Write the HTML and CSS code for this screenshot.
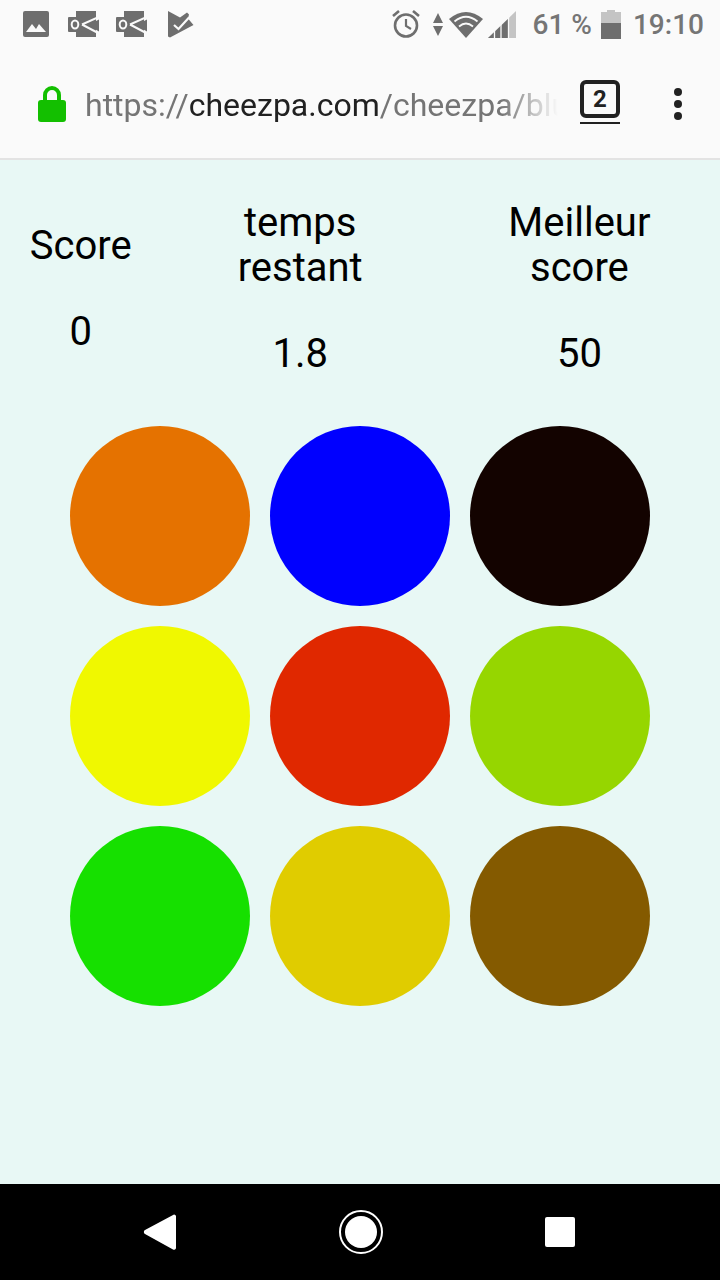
FILE: index.html
```html
<!DOCTYPE html>
<html>
  <head>
    <meta charset="UTF-8">
    <title>Cheezpa</title>
    <link rel="stylesheet" href="styles.css">
  </head>
  <body>
    <div class="status">
      <div class="status-left">
        <svg class="ic-photo" width="26" height="26" viewBox="0 0 26 26"><path d="M2 0h22a2 2 0 0 1 2 2v22a2 2 0 0 1-2 2H2a2 2 0 0 1-2-2V2a2 2 0 0 1 2-2z" fill="#6e6e6e"/><path d="M3 21l6-8 4 5 3-5 7 8z" fill="#fafafa"/></svg>
        <svg class="ic-mail" width="32" height="26" viewBox="0 0 32 26"><path d="M8 0h20v26H8z" fill="#6e6e6e"/><rect x="0" y="6" width="14" height="15" rx="1" fill="#6e6e6e"/><path d="M14 13.500L32 5.500M14 13.500L32 23" stroke="#fafafa" stroke-width="2" fill="none"/><path d="M31 8.500v12L20 14z" fill="#6e6e6e"/><ellipse cx="7" cy="13.500" rx="3.300" ry="4" fill="none" stroke="#fafafa" stroke-width="2"/></svg>
        <svg class="ic-mail" width="32" height="26" viewBox="0 0 32 26"><path d="M8 0h20v26H8z" fill="#6e6e6e"/><rect x="0" y="6" width="14" height="15" rx="1" fill="#6e6e6e"/><path d="M14 13.500L32 5.500M14 13.500L32 23" stroke="#fafafa" stroke-width="2" fill="none"/><path d="M31 8.500v12L20 14z" fill="#6e6e6e"/><ellipse cx="7" cy="13.500" rx="3.300" ry="4" fill="none" stroke="#fafafa" stroke-width="2"/></svg>
        <svg class="ic-check" width="26" height="27" viewBox="0 0 26 27"><path d="M0 0l12 6.500 7-5 2 2-1 4 5.500 6.500L2 26.500l-2-1z" fill="#6e6e6e"/><path d="M6 14l4.500 4L21 6.500" stroke="#fafafa" stroke-width="2.200" fill="none"/></svg>
      </div>
      <div class="status-right">
        <svg class="ic-alarm" width="28" height="28" viewBox="0 0 28 28"><circle cx="14" cy="15.500" r="11" fill="none" stroke="#6e6e6e" stroke-width="2.600"/><path d="M14 9v7l5 3" fill="none" stroke="#6e6e6e" stroke-width="2.200"/><path d="M1 6l6-5M27 6l-6-5" stroke="#6e6e6e" stroke-width="2.600"/></svg>
        <svg class="ic-arrows" width="10" height="23" viewBox="0 0 10 23"><path d="M5 0l5 10H0zM0 13h10L5 23z" fill="#6e6e6e"/></svg>
        <svg class="ic-wifi" width="34" height="27" viewBox="0 0 34 27"><path d="M0 8Q17-6 34 8L17 27z" fill="#6e6e6e"/><path d="M5.500 10.500Q17 1 28.500 10.500M10 15.500Q17 9.500 24 15.500" fill="none" stroke="#fafafa" stroke-width="1.800"/></svg>
        <svg class="ic-signal" width="28" height="27" viewBox="0 0 28 27"><path d="M0 27L28 0v27z" fill="#c4c4c4"/><path d="M0 27l20-19v19z" fill="#6e6e6e"/><path d="M6.500 27V18M13 27V12M20.500 27V4" stroke="#fafafa" stroke-width="1.300"/></svg>
        <span class="pct">61 %</span>
        <svg class="ic-batt" width="20" height="29" viewBox="0 0 20 29"><path d="M6 0h8v2h6v11H0V2h6z" fill="#c4c4c4"/><path d="M0 13h20v16H0z" fill="#6e6e6e"/></svg>
        <span class="clock">19:10</span>
      </div>
    </div>

    <div class="toolbar">
      <svg class="ic-lock" width="28" height="36" viewBox="0 0 28 36"><path d="M7 16V9a7 7 0 0 1 14 0v7" fill="none" stroke="#13bf00" stroke-width="4"/><rect x="0" y="14" width="28" height="22" rx="3" fill="#13bf00"/></svg>
      <div class="url"><span class="url-dim">https://</span>cheezpa.com<span class="url-dim">/cheezpa/blu</span></div>
      <div class="tabs"><span class="tabs-box">2</span></div>
      <div class="menu"><i></i><i></i><i></i></div>
    </div>

    <div class="page">
      <div class="scores">
        <div class="score score-a">
          <div class="score-label">Score</div>
          <div class="score-value">0</div>
        </div>
        <div class="score score-b">
          <div class="score-label">temps<br>restant</div>
          <div class="score-value">1.8</div>
        </div>
        <div class="score score-c">
          <div class="score-label">Meilleur<br>score</div>
          <div class="score-value">50</div>
        </div>
      </div>
      <div class="board">
        <div class="dot orange"></div>
        <div class="dot blue"></div>
        <div class="dot black"></div>
        <div class="dot yellow"></div>
        <div class="dot red"></div>
        <div class="dot lime"></div>
        <div class="dot green"></div>
        <div class="dot gold"></div>
        <div class="dot brown"></div>
      </div>
    </div>

    <div class="nav">
      <svg width="34" height="38" viewBox="0 0 34 38"><path d="M31 1.500a2 2 0 0 1 2 1.500v32a2 2 0 0 1-3 1.500L2 21a2.300 2.300 0 0 1 0-4z" fill="#fff"/></svg>
      <svg width="44" height="44" viewBox="0 0 44 44"><circle cx="22" cy="22" r="21" fill="none" stroke="#fff" stroke-width="2"/><circle cx="22" cy="22" r="16" fill="#fff"/></svg>
      <svg width="30" height="30" viewBox="0 0 30 30"><rect width="30" height="30" rx="2" fill="#fff"/></svg>
    </div>
  </body>
</html>
```

FILE: styles.css
```css
html
{
  background-color:#e8f8f5;
}
body
{
  margin:0;
  width:720px;
  height:1280px;
  display:flex;
  flex-direction:column;
  overflow:hidden;
  font-family:Roboto, sans-serif;
  color:#000;
}
svg
{
  display:block;
  flex:none;
}

/* status bar */
.status
{
  height:48px;
  background-color:#fafafa;
  display:flex;
  justify-content:space-between;
  align-items:center;
  padding:0 16px 0 23px;
  font-size:28px;
  color:#757575;
}
.status-left, .status-right
{
  display:flex;
  align-items:center;
}
.ic-mail
{
  margin-left:19px;
}
.ic-mail + .ic-mail
{
  margin-left:16px;
}
.ic-check
{
  margin-left:20px;
}
.ic-arrows
{
  margin-left:13px;
}
.ic-wifi
{
  margin-left:6px;
}
.ic-signal
{
  margin-left:5px;
}
.pct
{
  margin-left:17px;
  font-weight:500;
}
.ic-batt
{
  margin-left:9px;
}
.clock
{
  margin-left:12px;
  font-weight:500;
}

/* url bar */
.toolbar
{
  height:112px;
  box-sizing:border-box;
  background-color:#fafafa;
  border-bottom:2px solid #e3e3e3;
  display:flex;
  align-items:center;
  padding:2px 38px 0 38px;
}
.url
{
  margin:2px 0 0 19px;
  width:473px;
  white-space:nowrap;
  font-size:32px;
  color:#212121;
  -webkit-mask-image:linear-gradient(to right, #000 88%, transparent 100%);
  mask-image:linear-gradient(to right, #000 88%, transparent 100%);
}
.url-dim
{
  color:#757575;
}
.tabs
{
  margin:0 0 4px 22px;
  width:40px;
  padding-bottom:4px;
  border-bottom:2px solid #212121;
}
.tabs-box
{
  display:block;
  box-sizing:border-box;
  width:40px;
  height:38px;
  border:4px solid #212121;
  border-radius:6px;
  text-align:center;
  font-size:24px;
  line-height:30px;
  font-weight:700;
  color:#212121;
}
.menu
{
  margin-left:54px;
  display:flex;
  flex-direction:column;
  gap:4px;
}
.menu i
{
  display:block;
  width:8px;
  height:8px;
  border-radius:50%;
  background-color:#212121;
}

/* game */
.page
{
  flex:1;
  background-color:#e8f8f5;
}
.scores
{
  display:flex;
  align-items:center;
  padding-top:40px;
}
.score
{
  text-align:center;
  font-size:40px;
  line-height:45px;
}
.score-a
{
  width:162px;
}
.score-b
{
  width:278px;
}
.score-c
{
  width:282px;
}
.score-value
{
  margin-top:41px;
}
.board
{
  display:grid;
  grid-template-columns:repeat(3, 180px);
  gap:20px;
  justify-content:center;
  margin-top:50px;
}
.dot
{
  height:180px;
  border-radius:50%;
}
.orange { background-color:#e57200; }
.blue { background-color:#0000ff; }
.black { background-color:#130300; }
.yellow { background-color:#f0f800; }
.red { background-color:#e02800; }
.lime { background-color:#96d600; }
.green { background-color:#16e000; }
.gold { background-color:#e0cc00; }
.brown { background-color:#845a00; }

/* android nav */
.nav
{
  height:96px;
  background-color:#000;
  display:flex;
  align-items:center;
  justify-content:space-between;
  padding:0 145px 0 143px;
}
```
